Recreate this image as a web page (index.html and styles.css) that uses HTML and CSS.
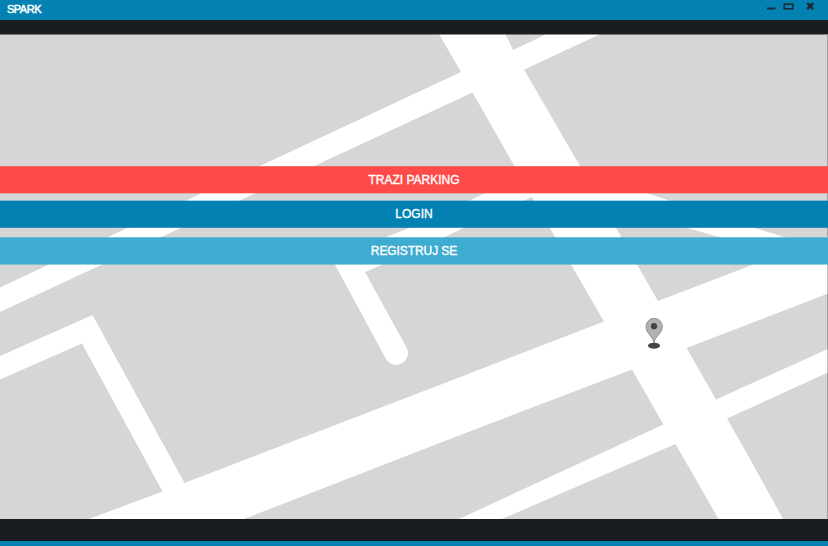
FILE: index.html
```html
<!DOCTYPE html>
<html lang="sr">
<head>
<meta charset="utf-8">
<title>SPARK</title>
<link rel="stylesheet" href="styles.css">
</head>
<body>
<div class="window">
  <header class="titlebar">
    <h1 class="title">SPARK</h1>
    <svg class="controls" width="52" height="16" viewBox="764 0 52 16" aria-hidden="true">
      <path class="glyph" d="M767 8.500h8.500"/>
      <rect class="glyph frame" x="784.200" y="4.200" width="8.600" height="4.600"/>
      <path class="glyph cross" d="M807.200 3.200l6 6M813.200 3.200l-6 6"/>
    </svg>
  </header>
  <div class="strip"></div>
  <main class="map">
    <svg class="roads" viewBox="0 34 828 485" preserveAspectRatio="none" aria-hidden="true">
      <g fill="#fff">
        <path d="M439 34H505.500L513 50 524 69.500 580 166 616 228 658 301 686.500 348 716 399.500 727 418.500 750 459 783 519H718.500L675.500 444 663.500 424.500 632 369.500 604 321.500 532 197 472.500 92.500 461 72Z"/>
        <path d="M0 287.500L461 72H472.500L547 34H600L524 69.500 472.500 92.500 101 265 0 312Z"/>
        <path d="M513 50L547 34H600L524 69.500Z"/>
        <path d="M89 519L162.500 491.500 184.500 483 450 381 604 321.500 658 301 828 236V293.500L686.500 348 632 369.500 450 439 244 519Z"/>
        <path d="M459 519L663.500 424.500 716 399.500 828 349V372.500L727 418.500 675.500 444 502 519Z"/>
        <path d="M0 356L92.500 315 184.500 483 176 500 162.500 491.500 82 343.500 0 379.500Z"/>
        <path d="M332 259L409 228 488 192 540 170V193L532 197 463 228 381 265 365 272 406.500 347.500A11.700 11.700 0 0 1 385.700 358.500Z"/>
        <path d="M389 237L409 228H463L443 238Z"/>
        <path d="M575 170L646 193 755 228 784 237 815 246 775 258 719 237 688 228 597 200Z"/>
      </g>
      <path d="M653.700 342.500C653.200 336.500 646 333.500 646 326.500a8.200 8.200 0 0 1 16.400 0C662.400 333.500 654.700 336.500 654.200 342.500Z" fill="#b1b1b1" stroke="#929292"/>
      <circle cx="654" cy="326.200" r="3.100" fill="#444"/>
      <ellipse cx="654" cy="345.700" rx="6" ry="3" fill="#444"/>
    </svg>
    <nav class="menu">
      <button class="item find" type="button">TRAZI PARKING</button>
      <button class="item login" type="button">LOGIN</button>
      <button class="item register" type="button">REGISTRUJ SE</button>
    </nav>
  </main>
  <div class="strip"></div>
  <footer class="footer"></footer>
</div>
</body>
</html>
```

FILE: styles.css
```css
* { box-sizing: border-box; }
body { margin: 0; font-family: "Liberation Sans", Arial, sans-serif; }
.window {
  display: grid;
  grid-template-rows: 20px 14px 485px 22px 5px;
  height: 546px;
  overflow: hidden;
}
.titlebar {
  display: flex;
  justify-content: space-between;
  align-items: flex-start;
  padding: 0 12px 0 7px;
  background: #0281b2;
}
.title {
  margin: 0;
  font-size: 11px;
  font-weight: 400;
  line-height: 18px;
  letter-spacing: -0.5px;
  color: #fff;
  -webkit-text-stroke: 0.5px #fff;
}
.glyph { fill: none; stroke: #1b2a33; stroke-width: 2; }
.frame { stroke-width: 1.6; }
.cross { stroke-width: 2.4; }
.strip { background: #191c21; }
.footer { background: #0281b2; }
.map {
  position: relative;
  padding-top: 132px;
  background: #d6d6d6;
}
.map::after {
  content: "";
  position: absolute;
  inset: 0;
  border-top: 1px solid rgba(35, 30, 40, 0.5);
  border-right: 1px solid rgba(0, 0, 0, 0.25);
  pointer-events: none;
}
.roads {
  position: absolute;
  inset: 0;
  width: 100%;
  height: 100%;
}
.menu {
  position: relative;
  z-index: 1;
  display: grid;
  grid-template-rows: 28px 28px 28px;
  row-gap: 8px;
}
.item {
  border: 0 solid transparent;
  border-width: 1px 0;
  padding: 0;
  font: 12px/26px "Liberation Sans", Arial, sans-serif;
  color: #fff;
  -webkit-text-stroke: 0.35px #fff;
}
.find {
  background: linear-gradient(#ff4a4a, #ff4a4a) padding-box;
  border-color: rgba(255, 74, 74, 0.8) transparent rgba(255, 74, 74, 0.3);
}
.login {
  margin: -2px 0 2px;
  background: linear-gradient(#0281b2, #0281b2) padding-box;
  border-color: rgba(2, 129, 178, 0.35) transparent rgba(2, 129, 178, 0.8);
}
.register {
  margin: -1px 0 1px;
  background: linear-gradient(#3eabd0, #3eabd0) padding-box;
  border-color: rgba(62, 171, 208, 0.7) transparent rgba(62, 171, 208, 0.55);
  letter-spacing: -0.08px;
}
```
